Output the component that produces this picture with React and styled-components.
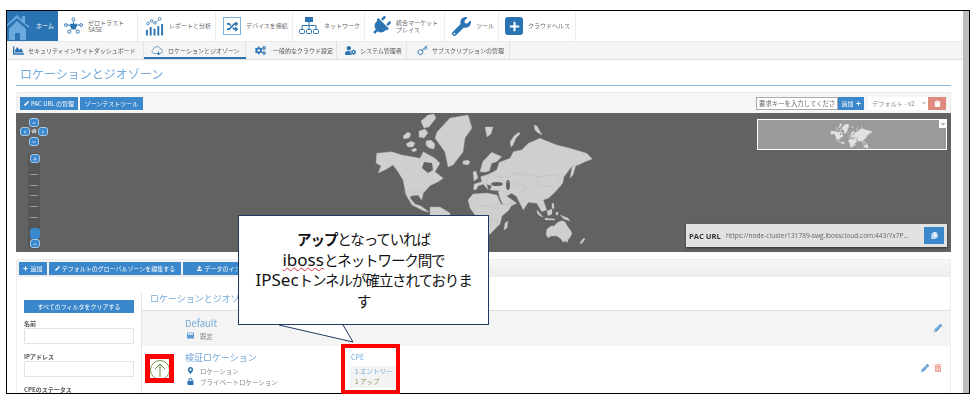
import styled, { createGlobalStyle } from 'styled-components';
import {
  FaPlug, FaWrench, FaRandom, FaPencilAlt, FaTrashAlt, FaPlus, FaUpload, FaMapMarkerAlt,
  FaLock, FaCogs, FaChartArea, FaUserCog, FaChevronUp, FaChevronDown,
  FaChevronLeft, FaChevronRight, FaHome, FaMinus, FaWindowMaximize, FaCopy, FaClipboard,
} from 'react-icons/fa';
import { FiKey } from 'react-icons/fi';

const GlobalStyle = createGlobalStyle`
  html, body { margin: 0; padding: 0; background: #fff; }
  body { font-family: "Noto Sans CJK JP", "Noto Sans", sans-serif; }
  * { box-sizing: border-box; }
`;

const blue = '#2a74b3';
const btnBlue = '#3a87cb';
const linkBlue = '#74a9d8';

const Stage = styled.div`
  position: relative;
  width: 964px;
  height: 384px;
  margin: 10px 0 0 6px;
`;

const Shot = styled.div`
  display: flex;
  width: 100%;
  height: 100%;
  border: 1px solid #000;
  overflow: hidden;
  filter: blur(0.35px);
`;

const Page = styled.div`
  flex: 1;
  min-width: 0;
  display: flex;
  flex-direction: column;
`;

const Scrollbar = styled.div`
  width: 6px;
  background: #bdbdbd;
`;

const TopNav = styled.div`
  display: flex;
  height: 30px;
  flex-shrink: 0;
`;

const TopItem = styled.div`
  display: flex;
  align-items: center;
  gap: 5px;
  width: ${(p) => p.$w}px;
  padding-left: ${(p) => p.$pad ?? 6}px;
  font-size: 6px;
  line-height: 7.5px;
  color: #666;
  background: ${(p) => (p.$active ? blue : '#fff')};
  box-shadow: ${(p) => (p.$active ? 'none' : 'inset -1px 0 0 #ececec')};
`;

const HomeLabel = styled.span`
  color: #fff;
  margin-left: 1px;
`;

const IconBox = styled.span`
  display: inline-flex;
  align-items: center;
  justify-content: center;
  flex-shrink: 0;
  width: ${(p) => p.$w || 19}px;
  height: 22px;
  color: ${blue};
  svg { display: block; }
`;

const PlugIcon = styled(FaPlug)`
  transform: rotate(45deg);
`;

const DeviceFrame = styled.span`
  display: inline-flex;
  align-items: center;
  justify-content: center;
  width: 18px;
  height: 18px;
  border: 1px solid #7fb0da;
  color: ${blue};
`;

const PlusTile = styled.span`
  display: inline-flex;
  align-items: center;
  justify-content: center;
  width: 18px;
  height: 18px;
  border-radius: 3px;
  background: ${blue};
  color: #fff;
`;

const SubNav = styled.div`
  display: flex;
  height: 19px;
  flex-shrink: 0;
  background: #f4f4f4;
  border-top: 1px solid #eaeaea;
  border-bottom: 1px solid #dedede;
`;

const SubItem = styled.div`
  display: flex;
  align-items: center;
  gap: ${(p) => p.$gap ?? 4}px;
  width: ${(p) => p.$w}px;
  padding-left: ${(p) => p.$pad}px;
  font-size: 6px;
  color: #555;
  white-space: nowrap;
  box-shadow: ${(p) => (p.$active ? `inset 0 -2px 0 ${blue}, inset -1px 0 0 #e2e2e2` : 'inset -1px 0 0 #e2e2e2')};
  svg { color: ${blue}; flex-shrink: 0; }
`;

const Content = styled.div`
  flex: 1;
  min-height: 0;
  display: flex;
  flex-direction: column;
  padding: 0 12px 0 9px;
`;

const Title = styled.h1`
  margin: 0;
  height: 26px;
  padding: 7px 0 0 4px;
  font-size: 12px;
  line-height: 14px;
  font-weight: 400;
  color: ${linkBlue};
  border-bottom: 1px solid #8ab8de;
`;

const MapToolbar = styled.div`
  display: flex;
  align-items: center;
  justify-content: space-between;
  height: 21px;
  margin-top: 6px;
  padding: 0 4px 0 3px;
  background: #f6f6f6;
  border: 1px solid #ececec;
  border-bottom: none;
`;

const ButtonRow = styled.div`
  display: flex;
  align-items: center;
  gap: ${(p) => p.$gap ?? 2}px;
`;

const Button = styled.div`
  display: flex;
  align-items: center;
  justify-content: center;
  gap: 2px;
  width: ${(p) => p.$w}px;
  height: 13px;
  background: ${btnBlue};
  color: #fff;
  font-size: 6px;
  white-space: nowrap;
`;

const KeyInput = styled.div`
  width: 82px;
  height: 13px;
  padding-left: 2px;
  background: #fff;
  border: 1px solid #aaa;
  color: #666;
  font-size: 6.4px;
  line-height: 11px;
  white-space: nowrap;
`;

const SelectBox = styled.div`
  display: flex;
  align-items: center;
  justify-content: space-between;
  width: 60px;
  height: 13px;
  margin-left: 4px;
  padding: 0 2px 0 4px;
  background: #fff;
  color: #888;
  font-size: 6.2px;
`;

const DangerButton = styled.div`
  display: flex;
  align-items: center;
  justify-content: center;
  width: 18px;
  height: 13px;
  background: #df8a7d;
  color: #fff;
`;

const MapArea = styled.div`
  position: relative;
  height: 139px;
  flex-shrink: 0;
  background: #626262;
  svg.world { display: block; width: 100%; height: 100%; }
`;

const Ctrl = styled.span`
  position: absolute;
  left: ${(p) => p.$x}px;
  top: ${(p) => p.$y}px;
  display: flex;
  align-items: center;
  justify-content: center;
  width: 10px;
  height: 9px;
  border-radius: 3px;
  background: ${btnBlue};
  border: 1px solid #a9cbe8;
  color: #d7e8f7;
`;

const CtrlHome = styled.span`
  position: absolute;
  left: 15px;
  top: 15px;
  color: #cfcfcf;
  display: flex;
`;

const ZoomTrack = styled.div`
  position: absolute;
  left: 12px;
  top: 40px;
  width: 12px;
  height: 96px;
  border-radius: 3px;
  background: #565656;
  display: flex;
  flex-direction: column;
  align-items: center;
  gap: 9.7px;
  padding-top: 21px;
`;

const ZoomTick = styled.span`
  width: 8px;
  height: 1px;
  flex-shrink: 0;
  background: #9a9a9a;
`;

const ZoomHandle = styled.span`
  position: absolute;
  left: 14px;
  top: 115px;
  width: 10px;
  height: 11px;
  border-radius: 3px;
  background: ${btnBlue};
`;

const MiniMap = styled.div`
  position: absolute;
  left: 741px;
  top: 6px;
  width: 190px;
  height: 31px;
  border: 1px solid #fff;
  background: #9a9a9a;
  svg.world { display: block; width: 100%; height: 100%; }
`;

const MiniToggle = styled.span`
  position: absolute;
  top: 0;
  right: 0;
  width: 7px;
  height: 8px;
  display: flex;
  align-items: center;
  justify-content: center;
  background: #fff;
  color: #555;
`;

const PacBox = styled.div`
  position: absolute;
  left: 670px;
  top: 111px;
  width: 261px;
  height: 23px;
  display: flex;
  align-items: center;
  padding: 0 3px;
  background: #e1e1e1;
  box-shadow: 0 1px 2px rgba(0, 0, 0, 0.5);
  font-family: "Open Sans", sans-serif;
`;

const PacLabel = styled.strong`
  font-size: 7.6px;
  color: #333;
  width: 37px;
  flex-shrink: 0;
`;

const PacUrl = styled.span`
  flex: 1;
  font-size: 6.6px;
  color: #666;
  white-space: nowrap;
`;

const CopyButton = styled.span`
  display: flex;
  align-items: center;
  justify-content: center;
  width: 20px;
  height: 17px;
  background: ${btnBlue};
  color: #e6f0f9;
`;

const Panel = styled.div`
  flex: 1;
  min-height: 0;
  margin-top: 7px;
  border: 1px solid #ededed;
  border-bottom: none;
  display: flex;
  flex-direction: column;
`;

const PanelToolbar = styled.div`
  height: 17px;
  flex-shrink: 0;
  padding: 2px 0 0 2px;
  background: linear-gradient(#f6f6f6, #eeeeee);
`;

const PanelBody = styled.div`
  flex: 1;
  min-height: 0;
  display: flex;
  padding-top: 16px;
`;

const Sidebar = styled.div`
  width: 124px;
  flex-shrink: 0;
  padding: 7px 7px 0 7px;
  display: flex;
  flex-direction: column;
`;

const ClearButton = styled.div`
  height: 13px;
  margin-bottom: 6px;
  flex-shrink: 0;
  background: ${btnBlue};
  color: #fff;
  font-size: 6px;
  line-height: 13px;
  text-align: center;
`;

const FieldLabel = styled.label`
  font-size: 6px;
  line-height: 9px;
  font-weight: 700;
  color: #555;
`;

const FieldInput = styled.div`
  height: 16px;
  margin-bottom: 8px;
  border: 1px solid #e2e2e2;
  border-radius: 1px;
  background: #fff;
  flex-shrink: 0;
`;

const Results = styled.div`
  flex: 1;
  min-width: 0;
  border-left: 1px solid #e4e4e4;
`;

const ResultsHead = styled.div`
  height: 17px;
  padding-left: 8px;
  font-size: 9px;
  line-height: 12px;
  color: ${linkBlue};
`;

const Row = styled.div`
  display: flex;
  height: ${(p) => p.$h}px;
  background: ${(p) => (p.$shade ? '#f4f4f4' : '#fff')};
  border-top: ${(p) => (p.$shade ? '1px solid #dfdfdf' : 'none')};
`;

const StatusCell = styled.div`
  width: 43px;
  flex-shrink: 0;
  padding: 14px 0 0 8px;
`;

const StatusCircle = styled.span`
  display: flex;
  align-items: center;
  justify-content: center;
  width: 20px;
  height: 20px;
  border-radius: 50%;
  border: 1px solid #6f9a4e;
`;

const NameCell = styled.div`
  width: 166px;
  flex-shrink: 0;
  padding-top: ${(p) => p.$top}px;
`;

const RowName = styled.div`
  font-size: ${(p) => p.$size}px;
  line-height: 12px;
  color: ${linkBlue};
  margin-bottom: 1px;
  white-space: nowrap;
`;

const RowMeta = styled.div`
  display: flex;
  align-items: center;
  gap: ${(p) => p.$gap ?? 6}px;
  height: 11px;
  padding-left: 2px;
  font-size: 6.5px;
  color: #888;
  svg { color: ${(p) => p.$tint || blue}; flex-shrink: 0; }
`;

const CpeCell = styled.div`
  width: 46px;
  flex-shrink: 0;
  padding-top: 6px;
  font-size: 7px;
  line-height: 10px;
  color: ${linkBlue};
`;

const CpeBox = styled.div`
  margin: 4px 0 0 -1px;
  height: 22px;
  padding: 1px 0 0 5px;
  background: #f3f3f3;
  border-radius: 2px;
  font-size: 6.5px;
  line-height: 9.5px;
  white-space: nowrap;
`;

const CpeUp = styled.div`
  color: #7d9a55;
`;

const RowActions = styled.div`
  flex: 1;
  display: flex;
  justify-content: flex-end;
  gap: 5px;
  padding: ${(p) => p.$top}px ${(p) => p.$right}px 0 0;
`;

const EditIcon = styled(FaPencilAlt)`
  color: #4f93cf;
`;

const DeleteIcon = styled(FaTrashAlt)`
  color: #ee9e92;
`;

const RedBox = styled.div`
  position: absolute;
  left: ${(p) => p.$x}px;
  top: ${(p) => p.$y}px;
  width: ${(p) => p.$w}px;
  height: ${(p) => p.$h}px;
  border: ${(p) => p.$t}px solid #f00;
`;

const Callout = styled.div`
  position: absolute;
  left: 232px;
  top: 205px;
  width: 251px;
  height: 110px;
  padding-top: 13px;
  background: #fff;
  border: 1px solid #1f3864;
  text-align: center;
  color: #111;
  font-size: 14.5px;
  line-height: 20.5px;
  letter-spacing: -1.1px;
  font-family: "Noto Sans CJK JP", sans-serif;
`;

const CalloutTail = styled.svg`
  position: absolute;
  left: 40px;
  top: 108px;
  overflow: visible;
`;

const Strong = styled.b`
  font-weight: 700;
`;

const Latin = styled.span`
  font-family: "Noto Sans", sans-serif;
  font-size: 17px;
  letter-spacing: 0;
  text-decoration: ${(p) => (p.$spell ? 'underline wavy #e03030 1px' : 'none')};
  text-underline-offset: 1px;
`;

// hand traced continents, coordinates follow the main map's view box
function WorldShapes({ land, line, sea }) {
  return (
    <g fill={land} stroke={line} strokeWidth="0.4" strokeLinejoin="round">
      <polygon points="376.7,153.3 391.7,151.7 402,155 412,156.7 420,158.3 423.3,151.7 435,158.3 440,163.3 435,171.7 443.3,178.3 438.3,181.7 430,185.7 423.3,193.3 421.7,200 418,195 411,196 410,198 415,204 421,206 429,212 424,211 412,205 406,195 403,180 398,171.7 393,165 385,170 378,173 381,166 376,163" />
      <polygon points="424,162 432,163 433,170 428,173 422,168" fill={sea} stroke="none" />
      <path d="M403 136l5-4 3 2-2 4-5 1zM406 144l5-3 4 2-2 4-5 0zM419 131l6-2 3 4-4 5-5-1zM421 121l7-6 6-1 2 4-7 9-5 1-2-4zM426 141l5-1 4 4-1 5-5-1-3-3zM411 150l4-2 2 2-3 2z" />
      <polygon points="437,132 450,118 468,115 472,128 465,138 463,152 453,165 448,167 445,152 435,138" />
      <path d="M463 161l5-1 2 2-2 3-5-1z" />
      <polygon points="430,207 440,207 450,213 450,216 430,216" />
      <polygon points="473.3,189 474.3,184 481.7,181.7 480.7,176.7 488.3,174.3 496.7,170 499.3,162.3 510,158.3 513.3,151.7 521.7,150 528.3,143.3 540,138.3 546.7,141 556.7,145 570,148.3 586.7,153.3 592.3,159 585,161.7 578.3,165 571.7,166.7 564,176.7 562.7,183.3 555,192.3 548.3,198.3 543.3,200 546.7,210 541.7,211.7 536.7,203.3 528.3,202.3 523.3,210 516.7,196.7 511.7,193.3 506.7,196 516.7,203.3 505,209 500,198.3 498.3,192.3 499.3,191 490,190 491.7,185.7 486.7,184.3 488.3,190 483.3,184.3 478.3,185.7 476,190" />
      <ellipse cx="497" cy="184" rx="6" ry="2" fill={sea} stroke="none" />
      <ellipse cx="508" cy="185" rx="2" ry="5" fill={sea} stroke="none" />
      <polygon points="480,171.7 482.7,161.7 491.7,152.3 501.7,156.7 496.7,161.700 491.7,163.300 489.3,171 485,172.300" />
      <polygon points="473,172 476,171 478,178 474,181" />
      <polygon points="485,127 493,127 491,134 487,137" />
      <polygon points="510,142 514,136 519,132 520,134 516,138 513,145 511,147" />
      <polygon points="534,125 537,126 542,135 538,133 535,130" />
      <polygon points="572,167 576,165 573,175 570,178" />
      <polygon points="468,200 473,194 487,193 497,195 501,204 505,205 513,202 509,210 502,216 500,224 490,234 480,238 475,215 470,208" />
      <polygon points="505,223 508,221 507,228 504,230" />
      <polygon points="537,210 543,217 540,216 537,213" />
      <polygon points="547,211 552,209 552,214 548,216" />
      <polygon points="545,218 555,219 555,220 545,220" />
      <polygon points="560,215 568,218 570,221 564,219" />
      <polygon points="552,203 554,204 554,209 552,208" />
      <polygon points="556,212 558,212 558,215 556,215" />
      <polygon points="547,229 551,226 554,226 557,223 560,221 563,221 565,222 568,227 571,231 572,234 569,239 566,241 563,242 561,239 557,236 551,236 548,238 546,234" />
      <polygon points="566,240 568,240 568,242 566,242" />
      <polygon points="580,243 582,240 584,238 585,239 583,242 581,244" />
      <path d="M506.7 178L516.7 173 536.7 176.7 556.7 175 560 180M536.7 176.7L540 185 553 187M506.7 181.700L526.7 186.7 521.7 195M478 205L490 207 500 204M484 218L498 222M403 192H423M484 184L490 175M496 176L505 178" fill="none" />
    </g>
  );
}

function HomeGlyph() {
  return (
    <svg width="23" height="27" viewBox="0 0 23 27">
      <path d="M-2 13L10 2l5 5V3h3v7l4 3v2L10 5-2 15z" fill="#6aa9de" />
      <path d="M2 16l8-8 9 8v11h-6v-7H8v7H2z" fill="#6aa9de" />
    </svg>
  );
}

function ZeroTrustGlyph() {
  return (
    <svg width="20" height="20" viewBox="0 0 20 20" fill="none" stroke={blue} strokeWidth="1">
      <path d="M3.5 9H7M13 9h3.5M10 5v3M7 14l2-2M13 14l-2-2" />
      <circle cx="2" cy="9" r="1.5" />
      <circle cx="18" cy="9" r="1.5" />
      <circle cx="10" cy="3" r="1.6" />
      <circle cx="5.5" cy="16" r="1.6" />
      <circle cx="14.5" cy="16" r="1.6" />
      <path d="M6.5 7.5h7V10c0 2-2 3.4-3.5 4-1.5-.6-3.5-2-3.5-4z" fill={blue} stroke="none" />
    </svg>
  );
}

function ReportGlyph() {
  return (
    <svg width="20" height="20" viewBox="0 0 20 20" fill="none" stroke={blue}>
      <path d="M2 20v-6M6 20v-9M10 20v-7M14 20v-10M18 20v-12" strokeWidth="2" />
      <path d="M3 7l4-2.5 3 2.5 5-4" strokeWidth="0.7" />
      <circle cx="3" cy="7.5" r="1.3" strokeWidth="0.8" fill="#fff" />
      <circle cx="7" cy="4.5" r="1.3" strokeWidth="0.8" fill="#fff" />
      <circle cx="10.5" cy="6.8" r="1.3" strokeWidth="0.8" fill="#fff" />
      <circle cx="15.5" cy="2.5" r="1.5" strokeWidth="0.8" fill="#fff" />
    </svg>
  );
}

function NetworkGlyph() {
  return (
    <svg width="20" height="18" viewBox="0 0 20 18" fill="none" stroke={blue} strokeWidth="1">
      <rect x="6.5" y="0.5" width="7" height="4" fill={blue} />
      <path d="M10 4.5V12M3 12V8.5h14V12" />
      <rect x="0.5" y="12.5" width="5" height="4" rx="1" />
      <rect x="7.5" y="12.5" width="5" height="4" rx="1" />
      <rect x="14.5" y="12.5" width="5" height="4" rx="1" />
    </svg>
  );
}

function CloudGlyph() {
  return (
    <svg width="12" height="11" viewBox="0 0 12 11" fill="none" stroke="#5d93c2" strokeWidth="0.8">
      <path d="M3 8.5a2.3 2.3 0 0 1-.3-4.5A3.3 3.3 0 0 1 9 3.7a2.4 2.4 0 0 1 .2 4.8z" />
      <path d="M7.5 6.5v3M6.2 8.5l1.3 1.5 1.3-1.5" stroke={blue} strokeWidth="1" />
    </svg>
  );
}

function App() {
  return (
    <>
      <GlobalStyle />
      <Stage>
        <Shot>
          <Page>
            <TopNav>
              <TopItem $w={51} $pad={0} $active>
                <HomeGlyph />
                <HomeLabel>ホーム</HomeLabel>
              </TopItem>
              <TopItem $w={80}>
                <IconBox><ZeroTrustGlyph /></IconBox>
                <span>ゼロトラスト<br />SASE</span>
              </TopItem>
              <TopItem $w={78} $pad={7}>
                <IconBox><ReportGlyph /></IconBox>
                <span>レポートと分析</span>
              </TopItem>
              <TopItem $w={77} $pad={7}>
                <DeviceFrame><FaRandom size={11} /></DeviceFrame>
                <span>デバイスを接続</span>
              </TopItem>
              <TopItem $w={72} $pad={6}>
                <IconBox $w={20}><NetworkGlyph /></IconBox>
                <span>ネットワーク</span>
              </TopItem>
              <TopItem $w={80} $pad={6}>
                <IconBox $w={20}><PlugIcon size={20} /></IconBox>
                <span>統合マーケット<br />プレイス</span>
              </TopItem>
              <TopItem $w={54} $pad={7}>
                <IconBox><FaWrench size={19} /></IconBox>
                <span>ツール</span>
              </TopItem>
              <TopItem $w={77} $pad={6}>
                <PlusTile><FaPlus size={11} /></PlusTile>
                <span>クラウドヘルス</span>
              </TopItem>
            </TopNav>
            <SubNav>
              <SubItem $w={137} $pad={6}>
                <FaChartArea size={11} />
                <span>セキュリティインサイトダッシュボード</span>
              </SubItem>
              <SubItem $w={102} $pad={7} $gap={5} $active>
                <CloudGlyph />
                <span>ロケーションとジオゾーン</span>
              </SubItem>
              <SubItem $w={91} $pad={9} $gap={7}>
                <FaCogs size={11} />
                <span>一般的なクラウド設定</span>
              </SubItem>
              <SubItem $w={70} $pad={8}>
                <FaUserCog size={11} />
                <span>システム管理者</span>
              </SubItem>
              <SubItem $w={103} $pad={10}>
                <FiKey size={11} />
                <span>サブスクリプションの管理</span>
              </SubItem>
            </SubNav>
            <Content>
              <Title>ロケーションとジオゾーン</Title>
              <MapToolbar>
                <ButtonRow>
                  <Button $w={58}><FaPencilAlt size={5} />PAC URL の管理</Button>
                  <Button $w={63}>ゾーンテストツール</Button>
                </ButtonRow>
                <ButtonRow $gap={0}>
                  <KeyInput>要求キーを入力してくださ</KeyInput>
                  <Button $w={26}>追加<FaPlus size={5} /></Button>
                  <SelectBox>デフォルト - v2<FaChevronDown size={4} /></SelectBox>
                  <DangerButton><FaClipboard size={7} /></DangerButton>
                </ButtonRow>
              </MapToolbar>
              <MapArea>
                <svg className="world" viewBox="16 113 935 139">
                  <WorldShapes land="#cfcfcf" line="#b0b0b0" sea="#626262" />
                </svg>
                <Ctrl $x={13} $y={5}><FaChevronUp size={4} /></Ctrl>
                <Ctrl $x={4} $y={14}><FaChevronLeft size={4} /></Ctrl>
                <CtrlHome><FaHome size={6} /></CtrlHome>
                <Ctrl $x={22} $y={14}><FaChevronRight size={4} /></Ctrl>
                <Ctrl $x={13} $y={24}><FaChevronDown size={4} /></Ctrl>
                <ZoomTrack>
                  <ZoomTick /><ZoomTick /><ZoomTick /><ZoomTick /><ZoomTick />
                </ZoomTrack>
                <Ctrl $x={14} $y={41}><FaPlus size={4} /></Ctrl>
                <ZoomHandle />
                <Ctrl $x={14} $y={126}><FaMinus size={4} /></Ctrl>
                <MiniMap>
                  <svg className="world" viewBox="12 95 950 150">
                    <WorldShapes land="#e2e2e2" line="#e2e2e2" sea="#9a9a9a" />
                  </svg>
                  <MiniToggle><FaChevronDown size={4} /></MiniToggle>
                </MiniMap>
                <PacBox>
                  <PacLabel>PAC URL</PacLabel>
                  <PacUrl>https://node-cluster131789-swg.ibosscloud.com:443/Yx7P...</PacUrl>
                  <CopyButton><FaCopy size={7} /></CopyButton>
                </PacBox>
              </MapArea>
              <Panel>
                <PanelToolbar>
                  <ButtonRow>
                    <Button $w={28}><FaPlus size={5} />追加</Button>
                    <Button $w={132}><FaPencilAlt size={5} />デフォルトのグローバルゾーンを編集する</Button>
                    <Button $w={90}><FaUpload size={5} />データのインポート</Button>
                  </ButtonRow>
                </PanelToolbar>
                <PanelBody>
                  <Sidebar>
                    <ClearButton>すべてのフィルタをクリアする</ClearButton>
                    <FieldLabel>名前</FieldLabel>
                    <FieldInput />
                    <FieldLabel>IPアドレス</FieldLabel>
                    <FieldInput />
                    <FieldLabel>CPEのステータス</FieldLabel>
                  </Sidebar>
                  <Results>
                    <ResultsHead>ロケーションとジオゾーン</ResultsHead>
                    <Row $h={36} $shade>
                      <StatusCell />
                      <NameCell $top={6}>
                        <RowName $size={9.5}>Default</RowName>
                        <RowMeta $tint="#5c9bd1"><FaWindowMaximize size={7} />既定</RowMeta>
                      </NameCell>
                      <RowActions $top={13} $right={8}>
                        <EditIcon size={8} />
                      </RowActions>
                    </Row>
                    <Row $h={47}>
                      <StatusCell>
                        <StatusCircle>
                          <svg width="12" height="14" viewBox="0 0 12 14" fill="none" stroke="#5f8d3f" strokeWidth="1">
                            <path d="M6 14V1M1 6l5-5 5 5" />
                          </svg>
                        </StatusCircle>
                      </StatusCell>
                      <NameCell $top={6}>
                        <RowName $size={9}>検証ロケーション</RowName>
                        <RowMeta><FaMapMarkerAlt size={7} />ロケーション</RowMeta>
                        <RowMeta><FaLock size={7} />プライベートロケーション</RowMeta>
                      </NameCell>
                      <CpeCell>
                        CPE
                        <CpeBox>
                          1 エントリー
                          <CpeUp>1 アップ</CpeUp>
                        </CpeBox>
                      </CpeCell>
                      <RowActions $top={18} $right={8}>
                        <EditIcon size={8} />
                        <DeleteIcon size={8} />
                      </RowActions>
                    </Row>
                  </Results>
                </PanelBody>
              </Panel>
            </Content>
          </Page>
          <Scrollbar />
        </Shot>
        <RedBox $x={139} $y={344} $w={29} $h={29} $t={5} />
        <RedBox $x={335} $y={334} $w={59} $h={50} $t={4} />
        <Callout>
          <Strong>アップ</Strong>となっていれば<br />
          <Latin $spell>iboss</Latin>とネットワーク間で<br />
          <Latin>IPSec</Latin>トンネルが確立されておりま<br />
          す
          <CalloutTail width="74" height="20" viewBox="0 0 74 20">
            <path d="M0 1L74 18 64 1" fill="#fff" stroke="#1f3864" strokeWidth="1" />
          </CalloutTail>
        </Callout>
      </Stage>
    </>
  );
}

export default App;
